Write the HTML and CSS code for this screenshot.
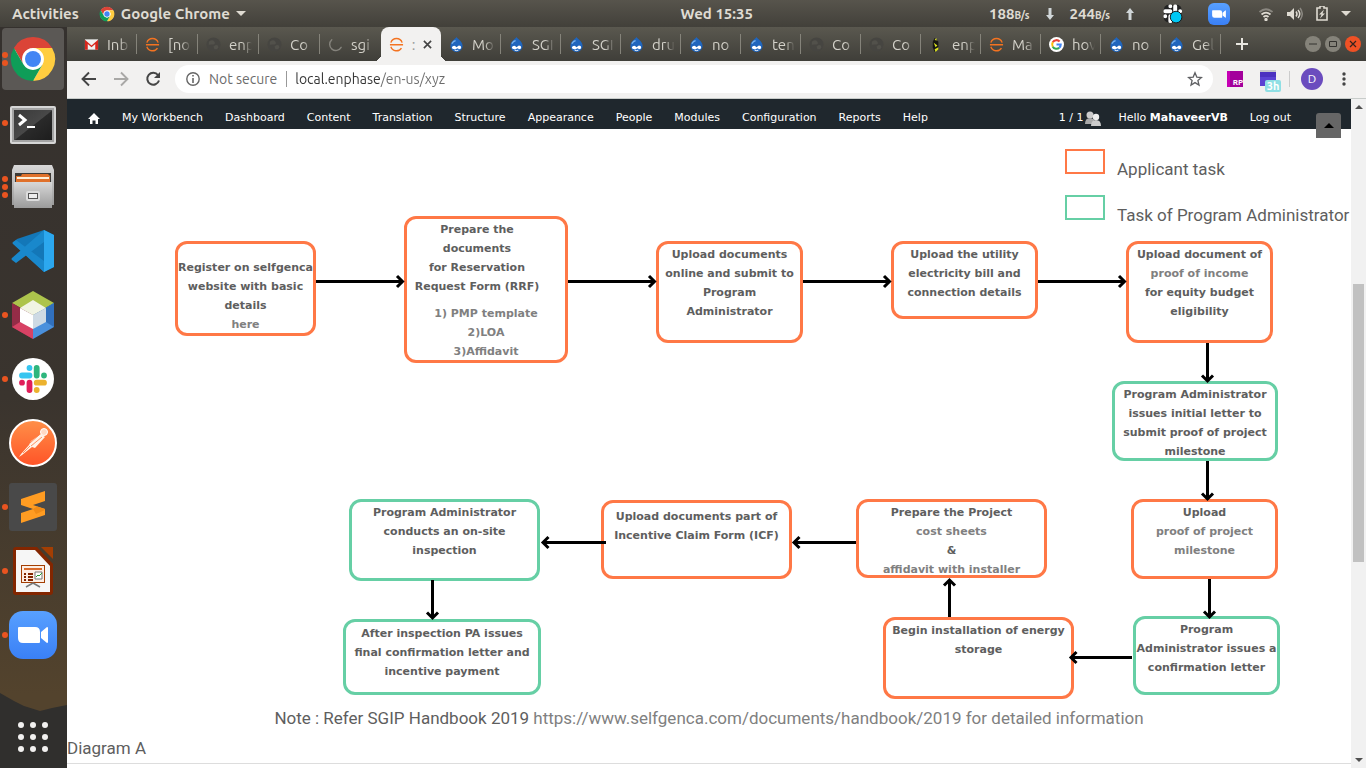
FILE: index.html
```html
<!DOCTYPE html>
<html lang="en">
<head>
<meta charset="utf-8">
<title>SGIP process</title>
<link rel="stylesheet" href="styles.css">
</head>
<body>
<svg class="defs" aria-hidden="true">
  <defs>
    <linearGradient id="blue" x1="0" y1="0" x2="0" y2="1"><stop offset="0" stop-color="#58a0ff"/><stop offset="1" stop-color="#3a80f6"/></linearGradient>
    <linearGradient id="pm" x1="0" y1="0" x2="0" y2="1"><stop offset="0" stop-color="#ff9049"/><stop offset="1" stop-color="#ff5327"/></linearGradient>
    <linearGradient id="screen" x1="0" y1="0" x2="1" y2="1"><stop offset="0" stop-color="#3a3a3a"/><stop offset=".5" stop-color="#484848"/><stop offset=".52" stop-color="#2a2a2a"/><stop offset="1" stop-color="#1d1d1d"/></linearGradient>
    <linearGradient id="steel" x1="0" y1="0" x2="0" y2="1"><stop offset="0" stop-color="#d8d8d8"/><stop offset="1" stop-color="#9b9b9b"/></linearGradient>
  </defs>
  <symbol id="chrome" viewBox="0 0 48 48">
    <circle cx="24" cy="24" r="21" fill="#fff"/>
    <path d="M24 2A22 22 0 0 1 43.1 13H24A11 11 0 0 0 14.5 29.5L4.9 13A22 22 0 0 1 24 2Z" fill="#db4437"/>
    <path d="M43.1 13A22 22 0 0 1 24 46L33.5 29.5A11 11 0 0 0 24 13Z" fill="#ffcd40"/>
    <path d="M4.9 13A22 22 0 0 0 24 46L33.5 29.5A11 11 0 0 1 14.5 29.5Z" fill="#0f9d58"/>
    <circle cx="24" cy="24" r="10" fill="#fff"/><circle cx="24" cy="24" r="8" fill="#4285f4"/>
  </symbol>
  <symbol id="gmail" viewBox="0 0 16 16">
    <path d="M1 2.500h14v11H1z" fill="#f1f1f1"/><path d="M1 13.500V3l7 6 7-6v10.500h-3V7.500L8 11 4 7.500v6z" fill="#d8261c"/>
  </symbol>
  <symbol id="enphase" viewBox="0 0 16 16">
    <path d="M2 6A6.300 6.300 0 0 1 14 6M1 8.200h14M2 10.400A6.300 6.300 0 0 0 13.300 11.800" fill="none" stroke="#f37321" stroke-width="1.500"/>
  </symbol>
  <symbol id="globe" viewBox="0 0 16 16">
    <circle cx="8" cy="8" r="7.500" fill="#464541"/><path d="M3 5q4-3 6 0t-3 3-3 1M8 10q4-3 5 0t-4 3" fill="#52514b"/>
  </symbol>
  <symbol id="spin" viewBox="0 0 16 16"><path d="M4 3A6.500 6.500 0 1 0 14 11" fill="none" stroke="#85837c" stroke-width="1.500" stroke-linecap="round"/></symbol>
  <symbol id="drupal" viewBox="0 0 16 16">
    <path d="M8 0c1 2 6 4 6.500 9A6.500 6.500 0 0 1 8 16 6.500 6.500 0 0 1 1.500 9C2 4 7 2 8 0Z" fill="#1f65bd"/>
    <path d="M3 7q2-3 4-3" stroke="#78b2ea" stroke-width="1.500" fill="none"/>
    <path d="M3 11q1-2 3.500-1.500L8 11l2.500-2q2.500 0 2.500 2t-2 2l-2-1-2 1q-4 .5-4-2Z" fill="#fff"/><path d="M6 14q2 1 4 0" stroke="#fff" fill="none"/>
  </symbol>
  <symbol id="arrowfly" viewBox="0 0 16 16"><path d="M6 1l4 4v7l-4 4-2-5V5Z" fill="#161613"/><path d="M8 1v3l-2-1zM5 6l4 3-2 2zM6 13l4-2v2l-3 3z" fill="#d9e021"/></symbol>
  <symbol id="google" viewBox="0 0 16 16"><circle cx="8" cy="8" r="8" fill="#fff"/>
    <g fill="none" stroke-width="2.200"><path d="M11.300 4.700A4.600 4.600 0 0 0 4 5.700" stroke="#ea4335"/><path d="M4 5.700a4.600 4.600 0 0 0 0 4.600" stroke="#fbbc05"/><path d="M4 10.300a4.600 4.600 0 0 0 7 1.200" stroke="#34a853"/><path d="M11 11.500A4.600 4.600 0 0 0 12.500 8H8" stroke="#4285f4"/></g>
  </symbol>
  <symbol id="slack" viewBox="0 0 28 28">
    <g fill="none" stroke-width="5.800" stroke-linecap="round">
      <path d="M3 10.500h7.500M10.500 3h.01" class="sa"/><path d="M17.700 3v7.500M25 10.500h.01" class="sb"/><path d="M25 17.700h-7.300M17.700 25h.01" class="sc"/><path d="M10.500 17.700V25M3 17.700h.01" class="sd"/>
    </g>
    <path d="M10.500 3h3v3.500h-3zM21.500 7.500h3.500v6h-3.500zM14.800 21.500h3v3.500h-3zM3 14.800h3.500v3H3z" fill="none"/>
  </symbol>
  <symbol id="cam" viewBox="0 0 48 48"><path d="M9 17q0-1 1-1h16q5 0 5 5v10q0 1-1 1H14q-5 0-5-5ZM32 21l6-5q1 0 1 1v14q0 1-1 1l-6-5Z" fill="#fff"/></symbol>
</svg>

<header class="topbar">
  <div class="top-left">
    <button class="plain">Activities</button>
    <button class="plain app"><svg width="16" height="16"><use href="#chrome"/></svg>Google Chrome<svg width="10" height="6"><path d="M0 0h10L5 5z" fill="#dfdbd2"/></svg></button>
  </div>
  <time class="clock">Wed 15:35</time>
  <div class="top-right">
    <div class="net">
      <span>188<small>B/s</small></span><svg width="8" height="12"><path d="M2.500 0h3v7H8l-4 5-4-5h2.500z" fill="#d0d6d8"/></svg>
      <span>244<small>B/s</small></span><svg width="8" height="12"><path d="M2.500 12h3V5H8L4 0 0 5h2.500z" fill="#d0d6d8"/></svg>
    </div>
    <div class="tray">
      <svg class="mono" width="22" height="22" viewBox="0 0 36 36"><rect x="3" y="3" width="29" height="29" rx="8" fill="#222"/><use href="#slack" x="2" y="2" width="31" height="31"/><circle cx="23" cy="23" r="9.500" fill="#00c8f5" stroke="#111" stroke-width="1.500"/></svg>
      <svg width="22" height="22" viewBox="0 0 48 48"><rect width="48" height="48" rx="13" fill="url(#blue)"/><use href="#cam"/></svg>
    </div>
    <div class="status">
      <svg width="16" height="14" viewBox="0 0 16 14" fill="none" stroke="#dfdbd2" stroke-width="1.800"><path d="M1.500 5q6.500-5.500 13 0" stroke="#8a8780"/><path d="M3.500 7.500q4.500-3.800 9 0M5.500 10q2.500-2.200 5 0"/><circle cx="8" cy="12.500" r=".8"/></svg>
      <svg width="16" height="14" viewBox="0 0 16 14"><path d="M0 5h3l4-4v12L3 9H0z" fill="#dfdbd2"/><path d="M9 4.500q2 2.500 0 5M11 3q3.500 4 0 8" fill="none" stroke="#dfdbd2" stroke-width="1.500"/><path d="M13 1q4.500 6 0 12" fill="none" stroke="#8a8780" stroke-width="1.500"/></svg>
      <svg width="12" height="15" viewBox="0 0 12 15"><path d="M4 2V0h4v2h3v12H1V2z" fill="none" stroke="#dfdbd2" stroke-width="1.600"/><path d="M8 3.500 3 8.500h2.500L4 12.500l5-5H6.500z" fill="#dfdbd2"/></svg>
      <svg width="10" height="6"><path d="M0 0h10L5 5z" fill="#dfdbd2"/></svg>
    </div>
  </div>
</header>

<div class="desktop">
<nav class="dock" aria-label="Dock">
  <svg class="hill" width="67" height="75" viewBox="0 0 67 75" preserveAspectRatio="none"><path d="M0 0l14 8 10 5 16 5 12-3 15-3v63H0z" fill="#302f2d"/></svg>
  <button class="dock-item on" aria-label="Chrome"><i class="dots"><b></b><b></b></i><svg width="48" height="48"><use href="#chrome"/></svg></button>
  <button class="dock-item" aria-label="Terminal"><i class="dots"><b></b></i><svg width="48" height="48" viewBox="0 0 48 48"><g transform="translate(0 2)"><rect x="1" y="5" width="46" height="38" rx="2" fill="#d6d6d6"/><rect x="3" y="7" width="42" height="34" fill="#a4a4a4"/><rect x="5" y="9" width="38" height="30" fill="url(#screen)"/><path d="M10 14l6 5-6 5" fill="none" stroke="#fff" stroke-width="3"/><path d="M18 26h8" stroke="#fff" stroke-width="2"/></g></svg></button>
  <button class="dock-item" aria-label="Files"><i class="dots"><b></b><b></b><b></b></i><svg width="48" height="48" viewBox="0 0 48 48"><path d="M5 2h38l2 5v35H3V7z" fill="url(#steel)"/><path d="M6 10h36v10H6z" fill="#3d3a36"/><path d="M7 13h5l1-2h26l2 2v8H7z" fill="#e0712b"/><path d="M8 14h32v2H8z" fill="#fff0d8"/><path d="M5 19h38v26H5z" fill="url(#steel)"/><rect x="17" y="28" width="14" height="10" rx="2" fill="#ddd"/><rect x="19.500" y="30.500" width="9" height="5" fill="#eee" stroke="#555"/></svg></button>
  <button class="dock-item" aria-label="Code"><svg width="44" height="44" viewBox="0 0 44 44"><path d="M33 1l10 5v32l-10 5L2 14l4-4z" fill="#1377b8"/><path d="M33 1v42L2 15q-1-1 0-2l3-2 28 21V13L5 34l-4-3q-1-1 0-2z" fill="#1988cc"/><path d="M33 1l10 5v32l-10 5z" fill="#2ca8ef"/></svg></button>
  <button class="dock-item" aria-label="NetBeans"><i class="dots"><b></b></i><svg width="44" height="48" viewBox="0 0 44 48"><path d="M22 0l21 12-21 12L1 12z" fill="#adc44c"/><path d="M1 12v24l21 12V24z" fill="#942c47"/><path d="M43 12v24L22 48V24z" fill="#4a90dc"/><path d="M1 36l8-5 13 6v11z" fill="#d74264"/><path d="M43 12l-8 5v14l8 5z" fill="#3170bd"/><path d="M22 9l13 8-13 7-13-7z" fill="#f1f4e4"/><path d="M9 17v14l13 7V24z" fill="#fff"/><path d="M35 17v14l-13 7V24z" fill="#cedae4"/></svg></button>
  <button class="dock-item" aria-label="Slack"><i class="dots"><b></b></i><svg class="color" width="42" height="42" viewBox="0 0 42 42"><circle cx="21" cy="21" r="21" fill="#fff"/><use href="#slack" x="7" y="7" width="28" height="28"/></svg></button>
  <button class="dock-item" aria-label="Postman"><svg width="48" height="48" viewBox="0 0 48 48"><circle cx="24" cy="24" r="23" fill="url(#pm)" stroke="#fff" stroke-width="2"/><circle cx="35" cy="13" r="3.500" fill="#ffd9c4" stroke="#fff"/><path d="M32 15l4 3-10 11-3-1-10 8-3 2 2-3 8-9 2-4z" fill="#fff3e8"/><path d="M21 24l9-8M22 27l11-9M14 34l7-7" stroke="#ff7a40" stroke-width=".8"/></svg></button>
  <button class="dock-item" aria-label="Sublime"><i class="dots"><b></b></i><svg width="48" height="48" viewBox="0 0 48 48"><rect width="48" height="48" rx="3" fill="#494949"/><path d="M12 16l24-8v10l-12 4 12 4v6l-24 8V30l12-4-12-4z" fill="#ff9c22"/><path d="M12 22l12 4 4-2.500 8 2.500v1l-9 4-3-5z" fill="#f08b16"/></svg></button>
  <button class="dock-item" aria-label="Impress"><i class="dots"><b></b></i><svg width="40" height="48" viewBox="0 0 40 48"><path d="M3 0h21l16 17v28q0 3-3 3H3q-3 0-3-3V3q0-3 3-3z" fill="#832600"/><path d="M28 0h12v12z" fill="#a33e03"/><path d="M3 3h19l15 16v26H3z" fill="#f6f6f6"/><rect x="8.500" y="18.500" width="23" height="17" fill="#fdeee4" stroke="#a33e03"/><path d="M11 22h18" stroke="#d96a2b" stroke-width="2"/><path d="M11 27h2m2 0h5m-9 3h2m2 0h5m-9 3h2m2 0h5" stroke="#832600" stroke-width="1.800"/><path d="M22 25h7v7h-7z" fill="#fff" stroke="#777"/><path d="M23 30l2-2 1 1 3-3" fill="none" stroke="#2b9a35"/><path d="M20 36l-7 4m7-4l7 4" stroke="#777" stroke-width="1.500"/></svg></button>
  <button class="dock-item" aria-label="Zoom"><i class="dots"><b></b></i><svg width="48" height="48" viewBox="0 0 48 48"><rect width="48" height="48" rx="14" fill="url(#blue)"/><use href="#cam"/></svg></button>
  <button class="dock-item apps" aria-label="Show applications"><svg width="30" height="30" viewBox="0 0 30 30" fill="#f2f1f0"><circle cx="3" cy="3" r="3"/><circle cx="15" cy="3" r="3"/><circle cx="27" cy="3" r="3"/><circle cx="3" cy="15" r="3"/><circle cx="15" cy="15" r="3"/><circle cx="27" cy="15" r="3"/><circle cx="3" cy="27" r="3"/><circle cx="15" cy="27" r="3"/><circle cx="27" cy="27" r="3"/></svg></button>
</nav>

<div class="browser">
  <div class="tabstrip">
    <div class="tabs">
      <button class="tab wide"><svg><use href="#gmail"/></svg><span>Inb</span></button>
      <button class="tab wide"><svg><use href="#enphase"/></svg><span>[no</span></button>
      <button class="tab wide"><svg><use href="#globe"/></svg><span>enp</span></button>
      <button class="tab wide"><svg><use href="#globe"/></svg><span>Co</span></button>
      <button class="tab wide last"><svg><use href="#spin"/></svg><span>sgi</span></button>
      <button class="tab active"><svg><use href="#enphase"/></svg><em>:</em><svg class="x" viewBox="0 0 10 10"><path d="M1 1l8 8M9 1L1 9" stroke="#444" stroke-width="1.800"/></svg></button>
      <button class="tab"><svg><use href="#drupal"/></svg><span>Mo</span></button>
      <button class="tab"><svg><use href="#drupal"/></svg><span>SGI</span></button>
      <button class="tab"><svg><use href="#drupal"/></svg><span>SGI</span></button>
      <button class="tab"><svg><use href="#drupal"/></svg><span>dru</span></button>
      <button class="tab"><svg><use href="#drupal"/></svg><span>no</span></button>
      <button class="tab"><svg><use href="#drupal"/></svg><span>ten</span></button>
      <button class="tab"><svg><use href="#globe"/></svg><span>Co</span></button>
      <button class="tab"><svg><use href="#globe"/></svg><span>Co</span></button>
      <button class="tab"><svg><use href="#arrowfly"/></svg><span>enp</span></button>
      <button class="tab"><svg><use href="#enphase"/></svg><span>Ma</span></button>
      <button class="tab"><svg><use href="#google"/></svg><span>hov</span></button>
      <button class="tab"><svg><use href="#drupal"/></svg><span>no</span></button>
      <button class="tab"><svg><use href="#drupal"/></svg><span>Gel</span></button>
    </div>
    <button class="newtab" aria-label="New tab"><svg width="12" height="12"><path d="M6 0v12M0 6h12" stroke="#e8e6e0" stroke-width="2"/></svg></button>
    <div class="wincontrols">
      <button aria-label="Minimize"><svg width="16" height="16"><path d="M4 8h8" stroke="#33322e"/></svg></button>
      <button aria-label="Maximize"><svg width="16" height="16"><path d="M4.500 5.500h7v5h-7z" fill="none" stroke="#33322e"/></svg></button>
      <button class="close" aria-label="Close"><svg width="16" height="16"><path d="M5 5l6 6M11 5l-6 6" stroke="#33221e" stroke-width="1.200"/></svg></button>
    </div>
  </div>

  <div class="toolbar">
    <div class="navbtns">
      <button class="plain" aria-label="Back"><svg width="16" height="16" viewBox="0 0 16 16" fill="none" stroke="#454545" stroke-width="1.900"><path d="M15 8H2M8 1.500L1.500 8 8 14.500"/></svg></button>
      <button class="plain" aria-label="Forward"><svg width="16" height="16" viewBox="0 0 16 16" fill="none" stroke="#a9a8a6" stroke-width="1.900"><path d="M1 8h13M8 1.500L14.500 8 8 14.500"/></svg></button>
      <button class="plain" aria-label="Reload"><svg width="16" height="16" viewBox="0 0 16 16"><path d="M13 4A6 6 0 1 0 14 9.500" fill="none" stroke="#454545" stroke-width="2"/><path d="M15 1v6H9z" fill="#454545"/></svg></button>
    </div>
    <div class="omnibox">
      <svg width="14" height="14" viewBox="0 0 14 14"><circle cx="7" cy="7" r="6.200" fill="none" stroke="#666" stroke-width="1.400"/><path d="M7 3v1.600M7 6v5" stroke="#666" stroke-width="1.600"/></svg>
      <label for="url">Not secure</label>
      <input id="url" type="text" value="local.enphase/en-us/xyz" spellcheck="false">
      <button class="plain" aria-label="Bookmark"><svg width="16" height="16" viewBox="0 0 16 16"><path d="M8 1.800l1.800 4.300 4.700.4-3.600 3 1.100 4.600-4-2.500-4 2.500 1.100-4.600-3.600-3 4.700-.4z" fill="none" stroke="#5f6063" stroke-width="1.300"/></svg></button>
    </div>
    <div class="extensions">
      <button class="plain rp" aria-label="RP extension">RP</button>
      <button class="plain cal" aria-label="Timer"><svg width="18" height="18"><path d="M1 0h16v3H1z" fill="#c5c5cc"/><path d="M1 2h16v14H1z" fill="#5a42d3"/><path d="M1 2h16v5H1z" fill="#4b31c0"/></svg><span>3h</span></button>
      <button class="plain avatar">D</button>
      <button class="plain" aria-label="Menu"><svg width="4" height="14" fill="#444"><circle cx="2" cy="2" r="1.700"/><circle cx="2" cy="7" r="1.700"/><circle cx="2" cy="12" r="1.700"/></svg></button>
    </div>
  </div>

  <div class="viewport">
    <main class="page">
      <nav class="admin">
        <a href="#" aria-label="Home"><svg width="12" height="11" viewBox="0 0 12 11"><path d="M6 0l6 6h-2v5H7.500V7.500h-3V11H2V6H0z" fill="#fff"/></svg></a>
        <a href="#">My Workbench</a><a href="#">Dashboard</a><a href="#">Content</a><a href="#">Translation</a><a href="#">Structure</a><a href="#">Appearance</a><a href="#">People</a><a href="#">Modules</a><a href="#">Configuration</a><a href="#">Reports</a><a href="#">Help</a>
        <div class="account">
          <a href="#" class="users">1 / 1<svg width="16" height="15" viewBox="0 0 16 15"><circle cx="5" cy="4" r="3.500" fill="#ccc"/><path d="M0 13q0-6 5-6t5 6z" fill="#aaa"/><circle cx="11" cy="6" r="3.200" fill="#eee"/><path d="M6 15q0-6 5-6t5 6z" fill="#ccc"/></svg></a>
          <a href="#">Hello <strong>MahaveerVB</strong></a>
          <a href="#">Log out</a>
        </div>
      </nav>
      <button class="totop" aria-label="Back to top"><svg width="10" height="5"><path d="M0 5h10L5 0z" fill="#000"/></svg></button>

      <section class="canvas">
        <ul class="legend">
          <li><i class="swatch"></i>Applicant task</li>
          <li><i class="swatch pa"></i>Task of Program Administrator</li>
        </ul>

        <div class="node n-register">Register on selfgenca website with basic details<br><a href="#">here</a></div>
        <div class="node n-rrf"><p>Prepare the<br>documents<br>for Reservation<br>Request Form (RRF)</p><a href="#">1) PMP template</a><br><a href="#">2)LOA</a><br><a href="#">3)Affidavit</a></div>
        <div class="node n-online">Upload documents<br>online and submit to<br>Program<br>Administrator</div>
        <div class="node n-bill">Upload the utility<br>electricity bill and<br>connection details</div>
        <div class="node n-income">Upload document of<br><a href="#">proof of income</a><br>for equity budget<br>eligibility</div>
        <div class="node pa n-letter">Program Administrator<br>issues initial letter to<br>submit proof of project<br>milestone</div>
        <div class="node n-proof">Upload<br><a href="#">proof of project<br>milestone</a></div>
        <div class="node pa n-confirm">Program<br>Administrator issues a<br>confirmation letter</div>
        <div class="node n-install">Begin installation of energy<br>storage</div>
        <div class="node n-cost">Prepare the Project<br><a href="#">cost sheets</a><br>&amp;<br><a href="#">affidavit with installer</a></div>
        <div class="node n-icf">Upload documents part of<br>Incentive Claim Form (ICF)</div>
        <div class="node pa n-inspect">Program Administrator<br>conducts an on-site<br>inspection</div>
        <div class="node pa n-final">After inspection PA issues<br>final confirmation letter and<br>incentive payment</div>

        <svg class="arrows" width="1284" height="574" viewBox="67 129 1284 574" fill="none" stroke="#000" stroke-width="3">
          <path d="M316 281.500h86M397 276l5.500 5.500L397 287"/>
          <path d="M568 281.500h86M649 276l5.500 5.500L649 287"/>
          <path d="M803 281.500h86M884 276l5.500 5.500L884 287"/>
          <path d="M1038 281.500h86M1119 276l5.500 5.500L1119 287"/>
          <path d="M1207.500 343v38M1202 375.500l5.500 5.500 5.500-5.500"/>
          <path d="M1207.500 461v37M1202 493.500l5.500 5.500 5.500-5.500"/>
          <path d="M1209.500 579v37M1204 611.500l5.500 5.500 5.500-5.500"/>
          <path d="M1132 657.500h-60M1076.500 652l-5.500 5.500 5.500 5.500"/>
          <path d="M949.500 617v-36M944 585.500l5.500-5.500 5.500 5.500"/>
          <path d="M856 542.500h-61M799.500 537l-5.500 5.500 5.500 5.500"/>
          <path d="M606 542.500h-62M548.500 537l-5.500 5.500 5.500 5.500"/>
          <path d="M432.500 580v37M427 612.500l5.500 5.500 5.500-5.500"/>
        </svg>
      </section>
      <p class="note">Note : Refer SGIP Handbook 2019 <a href="#">https://www.selfgenca.com/documents/handbook/2019 for detailed information</a></p>
      <p class="caption">Diagram A</p>
    </main>
    <div class="scrollbar" aria-hidden="true">
      <svg width="8" height="4"><path d="M0 4h8L4 0z" fill="#505050"/></svg>
      <div class="track"><div class="thumb"></div></div>
      <svg width="8" height="4"><path d="M0 0h8L4 4z" fill="#505050"/></svg>
    </div>
  </div>
</div>
</div>
</body>
</html>
```
FILE: styles.css
```css
* { box-sizing: border-box; }
body {
  margin: 0; height: 100vh; display: flex; flex-direction: column; overflow: hidden;
  font-family: Ubuntu, "Noto Sans", sans-serif; font-size: 14px; background: #fff;
}
button { font: inherit; color: inherit; border: 0; padding: 0; background: none; }
a { color: inherit; text-decoration: none; }
svg { display: block; flex: none; }
.defs { position: absolute; width: 0; height: 0; }
.plain { display: flex; align-items: center; }

/* system bar */
.topbar {
  display: flex; align-items: center; flex: 0 0 27px; padding: 0 15px 0 12px;
  color: #dfdbd2; font-size: 15px; font-weight: 600; background: linear-gradient(#57544c, #42403a);
}
.top-left { display: flex; gap: 20px; flex: 0 0 50%; }
.app { gap: 6px; }
.clock { margin-left: -1px; }
.top-right { display: flex; align-items: center; gap: 28px; margin-left: auto; }
.net { display: flex; align-items: center; gap: 16px; }
.net small { font-size: 10px; }
.tray { display: flex; gap: 24px; }
.status { display: flex; align-items: center; gap: 13px; }
.color { --a: #36c5f0; --b: #2eb67d; --c: #ecb22e; --d: #e01e5a; }
.sa { stroke: var(--a, #fff); }
.sb { stroke: var(--b, #fff); }
.sc { stroke: var(--c, #fff); }
.sd { stroke: var(--d, #fff); }

.desktop { display: flex; flex: 1; min-height: 0; }

/* dock */
.dock {
  position: relative; flex: 0 0 67px; display: flex; flex-direction: column; align-items: flex-start;
  gap: 2px; padding: 1px 0 0 2px; background: linear-gradient(#35312e, #3a342e 50%, #53432d 90%);
}
.hill { position: absolute; left: 0; bottom: 0; }
.dock-item {
  position: relative; width: 62px; height: 62px; border-radius: 4px;
  display: flex; align-items: center; justify-content: center;
}
.dock-item.on { background: #5b5855; }
.apps { margin-top: auto; }
.dots { position: absolute; left: 0; top: 0; bottom: 0; display: flex; flex-direction: column; justify-content: center; gap: 2px; }
.dots b { width: 6px; height: 6px; border-radius: 50%; background: #e95420; }

/* browser chrome */
.browser { flex: 1; min-width: 0; display: flex; flex-direction: column; }
.tabstrip {
  display: flex; align-items: center; flex: 0 0 34px; padding: 0 5px 0 9px;
  color: #d3d1c9; background: linear-gradient(#5a584f, #3f3e39);
}
.tabs { display: flex; flex: 1; min-width: 0; align-self: stretch; }
.tab { position: relative; flex: 1 1 60px; min-width: 0; display: flex; align-items: center; padding: 0 4px 0 8px; font-size: 15px; gap: 8px; }
.tab.wide { flex-basis: 61px; }
.tab svg { width: 15px; height: 15px; }
.tab span {
  width: 23px; white-space: nowrap; text-align: left;
  -webkit-mask-image: linear-gradient(90deg, #000 55%, transparent); mask-image: linear-gradient(90deg, #000 55%, transparent);
}
.tab::after { content: ""; position: absolute; right: 0; top: 7px; bottom: 7px; width: 1px; background: #85837a; }
.tab.last::after { display: none; }
.tab.active { background: #f2f1f0; border-radius: 8px 8px 0 0; gap: 7px; }
.tab.active em { color: #999; font-style: normal; width: 5px; }
.tab.active .x { width: 9px; height: 9px; }
.tab.active::before, .tab.active::after {
  content: ""; position: absolute; top: auto; bottom: 0; width: 7px; height: 7px;
  background: radial-gradient(circle at 0 0, transparent 7px, #f2f1f0 7px);
}
.tab.active::before { left: -7px; }
.tab.active::after { right: -7px; background: radial-gradient(circle at 100% 0, transparent 7px, #f2f1f0 7px); }
.newtab { width: 42px; display: flex; justify-content: center; }
.wincontrols { display: flex; gap: 4px; margin-left: 42px; }
.wincontrols button { border-radius: 50%; background: #85837a; }
.wincontrols .close { background: #ef5125; }

.toolbar {
  display: flex; align-items: center; flex: 0 0 38px; padding: 0 20px 2px 14px;
  background: #f2f1f0; border-bottom: 1px solid #c8ccca;
}
.navbtns { display: flex; gap: 16px; }
.omnibox {
  display: flex; align-items: center; flex: 1; height: 28px; margin: 0 14px; padding: 0 10px 0 11px;
  background: #fff; border-radius: 14px; color: #6c6c6c;
}
.omnibox label { margin: 0 9px; }
.omnibox input {
  flex: 1; min-width: 0; height: 16px; border: 0; border-left: 1px solid #999; outline: 0; padding: 0 0 0 8px; font: inherit;
  color: #333; -webkit-text-fill-color: transparent;
  background: linear-gradient(90deg, #333 93px, #6c6c6c 93px) text;
}
.extensions { display: flex; align-items: center; gap: 16px; }
.rp {
  width: 16px; height: 16px; justify-content: flex-end; align-items: flex-end; color: #fff;
  font-size: 8px; line-height: 9px; font-weight: 700; border-left: 3px solid #c600b4; background: #a3009b;
}
.cal { position: relative; width: 22px; }
.cal span {
  position: absolute; left: 6px; top: 10px; width: 16px; border-radius: 2px; background: #8fdfe4;
  color: #fff; font-size: 11px; line-height: 12px; font-weight: 700;
}
.avatar { width: 22px; height: 22px; border-radius: 50%; justify-content: center; background: #6b4cbe; color: #fff; font-size: 12px; position: relative; margin: 0 3px 0 4px; }
.avatar::before { content: ""; position: absolute; left: -12px; top: 3px; width: 1px; height: 16px; background: #ccc; }

/* page */
.viewport { flex: 1; min-height: 0; display: flex; }
.page {
  position: relative; flex: 1; min-width: 0; overflow: hidden;
  color: #5e5e5e; font-family: Roboto, sans-serif; font-size: 17px; line-height: 30px;
}
.page p { margin: 0; }
.admin {
  display: flex; align-items: center; gap: 22px; height: 30px; padding: 8px 60px 0 21px;
  background: #1f272d; color: #fff; font: 11px/18px "DejaVu Sans", sans-serif; white-space: nowrap;
}
.account { display: flex; gap: 22px; margin-left: auto; }
.users { display: flex; align-items: center; gap: 2px; margin-right: -5px; }
.totop {
  position: absolute; right: 10px; top: 14px; width: 25px; height: 25px; border-radius: 3px 3px 0 0;
  display: flex; align-items: center; justify-content: center; background: #666;
}
.canvas { position: relative; height: 574px; }
.legend { position: absolute; left: 998px; top: 20px; margin: 0; padding: 0; list-style: none; white-space: nowrap; }
.legend li { display: flex; gap: 12px; height: 46px; line-height: 40px; }
.swatch { width: 40px; height: 25px; border: 2px solid #ff7846; }
.swatch.pa { border-color: #66cfa5; }
.arrows { position: absolute; left: 0; top: 0; pointer-events: none; }
.node {
  position: absolute; padding-top: 1px; border: 3px solid #ff7846; border-radius: 12px;
  font: bold 11px/19px "DejaVu Sans", sans-serif; text-align: center; white-space: nowrap;
}
.node.pa { border-color: #66cfa5; }
.node a, .note a { color: #808080; }
.node p { margin: 0 18px 8px 0; }

.n-register { left: 108px; top: 112px; width: 141px; height: 95px; padding-top: 14px; white-space: normal; }
.n-rrf { left: 337px; top: 87px; width: 164px; height: 147px; }
.n-online { left: 589px; top: 112px; width: 147px; height: 102px; }
.n-bill { left: 824px; top: 112px; width: 147px; height: 78px; }
.n-income { left: 1059px; top: 112px; width: 147px; height: 102px; }
.n-letter { left: 1045px; top: 252px; width: 166px; height: 80px; }
.n-proof { left: 1064px; top: 370px; width: 147px; height: 80px; }
.n-confirm { left: 1066px; top: 487px; width: 147px; height: 79px; }
.n-install { left: 816px; top: 488px; width: 191px; height: 82px; }
.n-cost { left: 789px; top: 370px; width: 191px; height: 79px; }
.n-icf { left: 534px; top: 371px; width: 191px; height: 79px; padding-top: 4px; }
.n-inspect { left: 282px; top: 370px; width: 191px; height: 82px; }
.n-final { left: 276px; top: 490px; width: 198px; height: 76px; padding-top: 2px; }

.note { text-align: center; }
.caption { border-bottom: 1px solid #ddd; }

/* scrollbar */
.scrollbar { flex: 0 0 15px; display: flex; flex-direction: column; align-items: center; padding: 6px 0; background: #f1f1f1; }
.track { flex: 1; width: 11px; padding: 175px 0 0; }
.thumb { height: 278px; background: #c1c1c1; }
```
